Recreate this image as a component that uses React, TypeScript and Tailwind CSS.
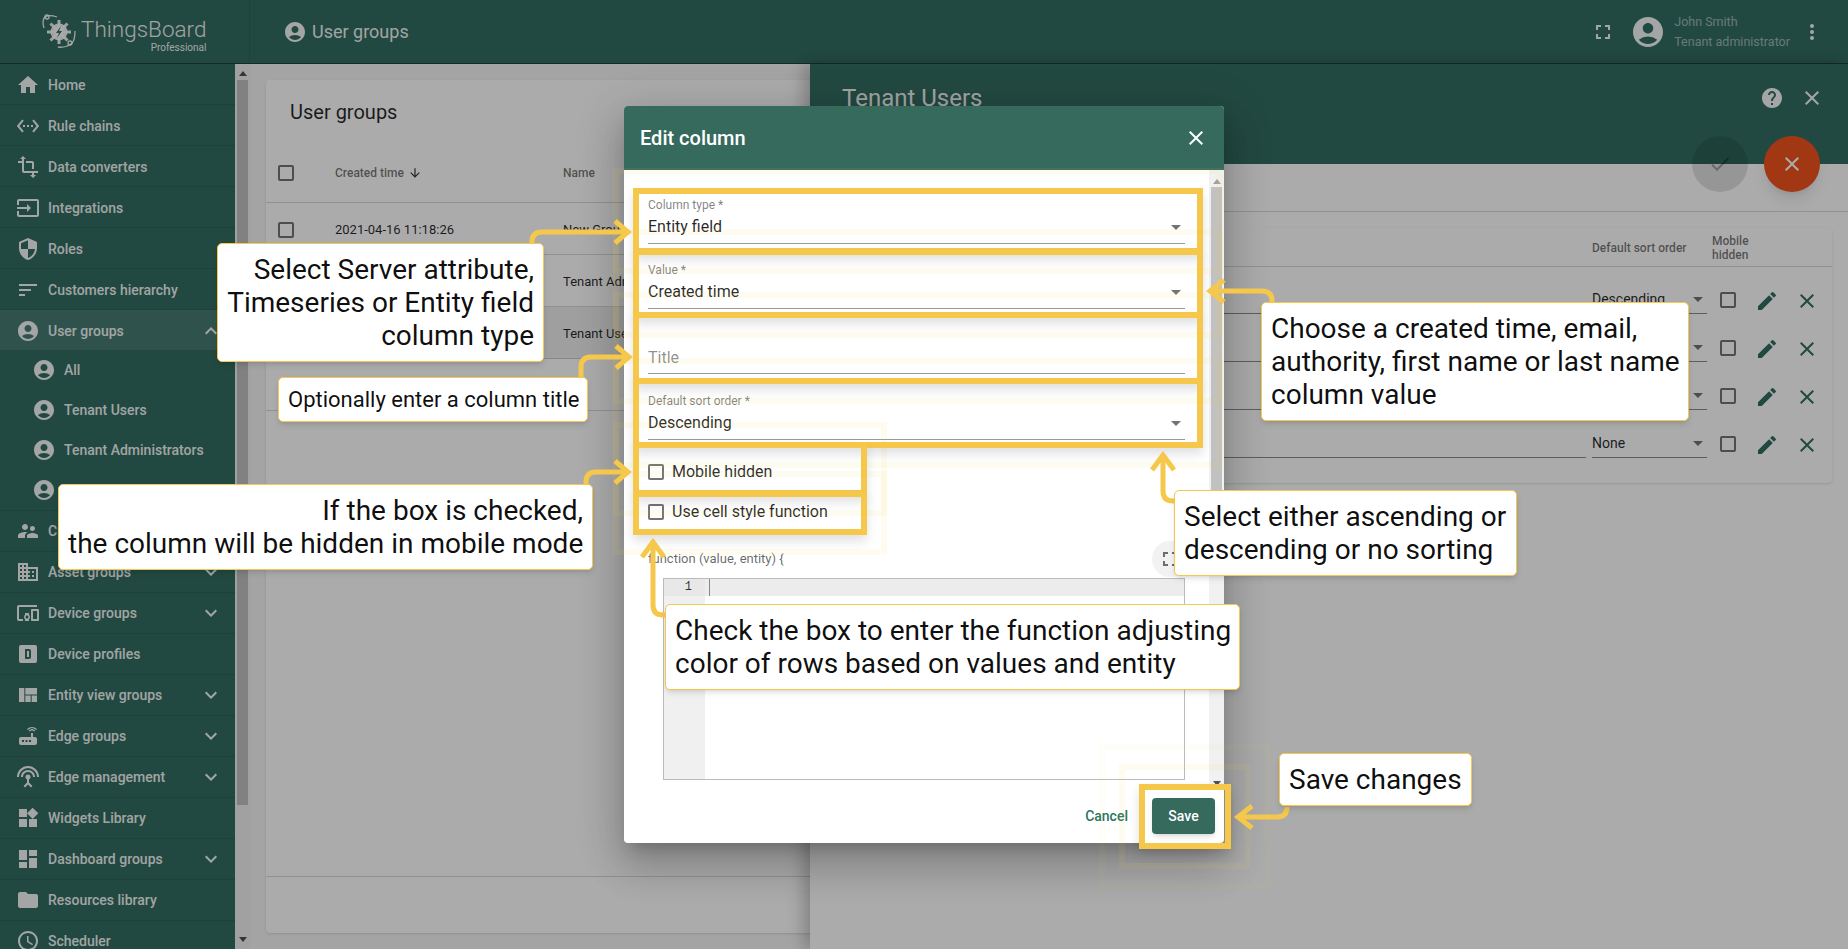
import type { ReactNode } from "react";
import type { IconType } from "react-icons";
import {
  MdAccountCircle,
  MdArrowDownward,
  MdArrowDropDown,
  MdCheck,
  MdClose,
  MdDashboard,
  MdDevicesOther,
  MdDomain,
  MdEdit,
  MdExpandLess,
  MdExpandMore,
  MdFolder,
  MdFullscreen,
  MdHelp,
  MdHome,
  MdInput,
  MdMoreVert,
  MdRouter,
  MdSchedule,
  MdSecurity,
  MdSettingsEthernet,
  MdSettingsInputAntenna,
  MdSort,
  MdSupervisorAccount,
  MdTransform,
  MdViewQuilt,
  MdWidgets,
} from "react-icons/md";

function ProfileIcon({ className }: { className?: string }) {
  return (
    <svg viewBox="0 0 24 24" fill="currentColor" className={className} aria-hidden>
      <path
        fillRule="evenodd"
        d="M5 3h14a2 2 0 0 1 2 2v14a2 2 0 0 1-2 2H5a2 2 0 0 1-2-2V5a2 2 0 0 1 2-2Zm4 4v10h4a2 2 0 0 0 2-2V9a2 2 0 0 0-2-2H9Zm2 2h2v6h-2V9Z"
      />
    </svg>
  );
}

type NavItem = { label: string; icon: IconType | typeof ProfileIcon; chevron?: boolean };

const NAV_TOP: NavItem[] = [
  { label: "Home", icon: MdHome },
  { label: "Rule chains", icon: MdSettingsEthernet },
  { label: "Data converters", icon: MdTransform },
  { label: "Integrations", icon: MdInput },
  { label: "Roles", icon: MdSecurity },
  { label: "Customers hierarchy", icon: MdSort },
];

const NAV_SUB = ["All", "Tenant Users", "Tenant Administrators", "Customer Users"];

const NAV_BOTTOM: NavItem[] = [
  { label: "Customer groups", icon: MdSupervisorAccount, chevron: true },
  { label: "Asset groups", icon: MdDomain, chevron: true },
  { label: "Device groups", icon: MdDevicesOther, chevron: true },
  { label: "Device profiles", icon: ProfileIcon },
  { label: "Entity view groups", icon: MdViewQuilt, chevron: true },
  { label: "Edge groups", icon: MdRouter, chevron: true },
  { label: "Edge management", icon: MdSettingsInputAntenna, chevron: true },
  { label: "Widgets Library", icon: MdWidgets },
  { label: "Dashboard groups", icon: MdDashboard, chevron: true },
  { label: "Resources library", icon: MdFolder },
  { label: "Scheduler", icon: MdSchedule },
];

function Logo() {
  return (
    <svg viewBox="0 0 40 40" className="h-[40px] w-[40px] text-white/90" aria-hidden>
      <g fill="none" stroke="currentColor" strokeWidth="1.3">
        <path d="M4 16C2 10 3 5 7 4c4-1 7 0 10 1" />
        <circle cx="7" cy="5" r="2" />
        <path d="M18 35c5 1 11-1 14-4 3-3 3-8 3-12" />
        <circle cx="30" cy="31" r="2" />
      </g>
      <circle cx="19" cy="20" r="8.5" fill="currentColor" />
      <g stroke="currentColor" strokeWidth="3">
        <path d="M19 8v24M7 20h24M10.5 11.5l17 17M27.5 11.5l-17 17" />
      </g>
      <path d="M21 14l-5 7h3l-2 5 5-7h-3l2-5Z" fill="#336e62" />
    </svg>
  );
}

function SideRow({ item, nudge = false }: { item: NavItem; nudge?: boolean }) {
  const Icon = item.icon;
  return (
    <div
      className={`flex h-[41px] shrink-0 items-center gap-2 border-b border-black/10 pl-4 pr-3 ${nudge ? "pt-[2px]" : ""}`}
    >
      <Icon className="h-6 w-6 shrink-0" />
      <span className="flex-1 truncate text-[14px] font-medium">{item.label}</span>
      {item.chevron ? <MdExpandMore className="h-6 w-6 shrink-0" /> : null}
    </div>
  );
}

function Sidebar() {
  return (
    <aside className="flex h-full w-[250px] shrink-0 overflow-hidden">
      <nav className="flex w-[235px] flex-col bg-[#336e62] text-white/95">
        {NAV_TOP.map((item) => (
          <SideRow key={item.label} item={item} nudge />
        ))}
        <div className="flex h-[40px] shrink-0 items-center gap-2 bg-white/10 pl-4 pr-3 pt-[2px]">
          <MdAccountCircle className="h-6 w-6" />
          <span className="flex-1 text-[14px] font-medium">User groups</span>
          <MdExpandLess className="h-6 w-6" />
        </div>
        <div className="flex shrink-0 flex-col border-b border-black/10">
          {NAV_SUB.map((label) => (
            <div key={label} className="flex h-[40px] items-center gap-2 pl-8">
              <MdAccountCircle className="h-6 w-6" />
              <span className="text-[14px] font-medium">{label}</span>
            </div>
          ))}
        </div>
        {NAV_BOTTOM.map((item) => (
          <SideRow key={item.label} item={item} />
        ))}
      </nav>
      <div className="flex w-[15px] flex-col items-center bg-[#f1f1f1]">
        <div className="mt-[7px] h-0 w-0 border-x-[4px] border-b-[5px] border-x-transparent border-b-[#505050]" />
        <div className="mt-[4px] h-[725px] w-[11px] bg-[#c1c1c1]" />
        <div className="mt-[132px] h-0 w-0 border-x-[4px] border-t-[5px] border-x-transparent border-t-[#505050]" />
      </div>
    </aside>
  );
}

function Box({ className = "" }: { className?: string }) {
  return <span className={`block h-4 w-4 shrink-0 rounded-[2px] border-2 border-black/55 ${className}`} />;
}

function GroupsCard() {
  const rows = [
    { date: "2021-04-16 11:18:26", name: "New Group", on: false },
    { date: "2021-04-16 11:18:26", name: "Tenant Administrators", on: false },
    { date: "2021-04-16 11:18:26", name: "Tenant Users", on: true },
  ];
  return (
    <section className="flex flex-1 flex-col rounded-sm bg-white shadow">
      <h2 className="flex h-16 items-center px-6 text-[20px] text-black/85">User groups</h2>
      <div className="grid h-[59px] grid-cols-[57px_228px_1fr] items-center border-b border-black/15 pl-3 text-[12px] font-medium text-black/55">
        <Box />
        <div className="flex items-center gap-1">
          Created time <MdArrowDownward className="h-[14px] w-[14px] text-black/80" />
        </div>
        <div>Name</div>
      </div>
      {rows.map((r) => (
        <div
          key={r.name}
          className={`grid h-[52px] grid-cols-[57px_228px_1fr] items-center border-b border-black/15 pl-3 pt-[2px] text-[13px] text-black/85 ${r.on ? "bg-[#eeeeee]" : ""}`}
        >
          <Box />
          <div>{r.date}</div>
          <div>{r.name}</div>
        </div>
      ))}
      <div className="h-[52px] border-b border-black/15" />
      <div className="flex-1" />
      <div className="h-[57px] border-t border-black/15" />
    </section>
  );
}

function ColumnRow({ sort }: { sort: string }) {
  return (
    <div className="flex h-12 items-start pl-4 pr-[13px]">
      <div className="h-[37px] flex-1 border-b border-black/45" />
      <div className="relative ml-1.5 flex h-[37px] w-[115px] items-end border-b border-black/45 pb-[6px] text-[14px] leading-4 text-black/85">
        {sort}
        <MdArrowDropDown className="absolute right-[-3px] top-[10px] h-6 w-6 text-black/55" />
      </div>
      <Box className="ml-[13px] mt-[15px]" />
      <MdEdit className="ml-[19px] mt-3 h-6 w-6 text-[#336e62]" />
      <MdClose className="ml-4 mt-3 h-6 w-6 text-[#336e62]" />
    </div>
  );
}

function TenantPanel() {
  return (
    <section className="absolute bottom-0 left-[810px] right-0 top-16 flex flex-col bg-white shadow-[-6px_0_16px_rgba(0,0,0,0.25)]">
      <header className="flex h-[100px] shrink-0 bg-[#336e62] pl-8 pr-6 pt-4 text-white/95">
        <h2 className="flex-1 text-[24px] leading-9">Tenant Users</h2>
        <MdHelp className="mr-4 mt-[6px] h-6 w-6" />
        <MdClose className="mt-[6px] h-6 w-6" />
      </header>
      <div className="absolute right-7 top-[72px] flex gap-4">
        <div className="flex h-14 w-14 items-center justify-center rounded-full bg-black/[0.12]">
          <MdCheck className="h-6 w-6 text-black/30" />
        </div>
        <div className="flex h-14 w-14 items-center justify-center rounded-full bg-[#f2521e] text-white shadow-lg">
          <MdClose className="h-6 w-6" />
        </div>
      </div>
      <div className="h-12 shrink-0 border-b border-black/15" />
      <div className="mx-4 mt-4 flex flex-col rounded-sm bg-white pb-[14px] shadow">
        <div className="mb-2.5 flex h-[39px] items-center border-b border-black/15 pt-px text-[12px] font-medium leading-[14px] text-black/55">
          <span className="ml-[766px] w-[120px]">Default sort order</span>
          <span>
            Mobile
            <br />
            hidden
          </span>
        </div>
        <ColumnRow sort="Descending" />
        <ColumnRow sort="Descending" />
        <ColumnRow sort="Descending" />
        <ColumnRow sort="None" />
      </div>
    </section>
  );
}

function SelectField({ label, value }: { label: string; value: string }) {
  return (
    <div className="relative mb-[15px] h-[50px] border-b border-black/40 pt-1">
      <div className="text-[12px] leading-[14px] text-black/50">{label}</div>
      <div className="mt-[5px] text-[16px] leading-5 text-black/85">{value}</div>
      <MdArrowDropDown className="absolute right-[-3px] top-[21px] h-6 w-6 text-black/55" />
    </div>
  );
}

function EditColumnDialog() {
  return (
    <div className="absolute left-[624px] top-[106px] flex h-[737px] w-[600px] flex-col overflow-hidden rounded bg-white shadow-[0_11px_15px_-7px_rgba(0,0,0,0.2),0_24px_38px_3px_rgba(0,0,0,0.14),0_9px_46px_8px_rgba(0,0,0,0.12)]">
      <header className="flex h-16 shrink-0 items-center justify-between bg-[#356a5c] pl-4 pr-[16px] text-white">
        <h2 className="text-[20px] font-medium">Edit column</h2>
        <MdClose className="h-6 w-6" />
      </header>
      <div className="flex min-h-0 flex-1">
        <div className="flex-1 overflow-hidden pl-6 pr-[24px] pt-6">
          <SelectField label="Column type *" value="Entity field" />
          <SelectField label="Value *" value="Created time" />
          <div className="mb-[16px] flex h-[50px] items-end border-b border-black/40 pb-[5px] text-[16px] leading-5 text-black/45">
            Title
          </div>
          <SelectField label="Default sort order *" value="Descending" />
          <label className="mt-[20px] flex h-6 items-center gap-2 text-[16px] text-black/85">
            <Box />
            Mobile hidden
          </label>
          <label className="mt-4 flex h-6 items-center gap-2 text-[16px] text-black/85">
            <Box />
            Use cell style function
          </label>
          <div className="mt-[27px] flex h-4 items-center justify-between text-[13px] text-black/60">
            function (value, entity) {"{"}
            <span className="-mr-[3px] flex h-9 w-9 items-center justify-center rounded-full bg-[#f2f2f2]">
              <MdFullscreen className="h-6 w-6 text-black/55" />
            </span>
          </div>
          <div className="ml-[15px] mt-[11px] flex h-[202px] border border-[#bbbbbb]">
            <div className="w-[41px] bg-[#f0f0f0]">
              <div className="h-[17px] bg-[#e8e8e8] pr-[13px] text-right font-['Liberation_Mono',monospace] text-[12px] leading-[17px] text-black/80">
                1
              </div>
            </div>
            <div className="flex-1">
              <div className="h-[17px] bg-[#ececec] pl-1">
                <div className="h-full w-px bg-[#888888]" />
              </div>
            </div>
          </div>
        </div>
        <div className="flex w-[15px] flex-col items-center bg-[#f1f1f1]">
          <div className="mt-[9px] h-0 w-0 border-x-[4px] border-b-[5px] border-x-transparent border-b-[#a0a0a0]" />
          <div className="mt-[3px] h-[345px] w-[11px] bg-[#c1c1c1]" />
          <div className="mt-[249px] h-0 w-0 border-x-[4px] border-t-[5px] border-x-transparent border-t-[#505050]" />
        </div>
      </div>
      <footer className="flex h-[54px] shrink-0 items-center justify-end gap-2 pr-[9px] text-[14px] font-medium">
        <button type="button" className="h-9 px-4 text-[#2a7560]">
          Cancel
        </button>
        <button type="button" className="h-9 w-[63px] rounded bg-[#356a5c] text-white shadow-md">
          Save
        </button>
      </footer>
    </div>
  );
}

const HIGHLIGHTS = [
  "left-[633px] top-[188px] h-[66px] w-[570px]",
  "left-[633px] top-[249px] h-[69px] w-[570px]",
  "left-[633px] top-[312px] h-[72px] w-[570px]",
  "left-[633px] top-[378px] h-[70px] w-[570px]",
  "left-[633px] top-[442px] h-[54px] w-[234px]",
  "left-[633px] top-[491px] h-[44px] w-[234px]",
  "left-[1139px] top-[784px] h-[65px] w-[92px]",
];

const GHOSTS = [
  "left-[613px] top-[168px] h-[106px] w-[610px]",
  "left-[613px] top-[229px] h-[109px] w-[610px]",
  "left-[613px] top-[292px] h-[112px] w-[610px]",
  "left-[613px] top-[358px] h-[110px] w-[610px]",
  "left-[613px] top-[422px] h-[94px] w-[274px]",
  "left-[613px] top-[471px] h-[84px] w-[274px]",
  "left-[1119px] top-[764px] h-[105px] w-[132px]",
  "left-[1099px] top-[744px] h-[145px] w-[172px] opacity-50",
];

function Callout({ className, children }: { className: string; children: ReactNode }) {
  return (
    <div
      className={`absolute whitespace-pre rounded-[5px] border border-[#f5c84c] bg-white p-[9px] text-black/95 shadow-md ${className}`}
    >
      {children}
    </div>
  );
}

function Arrows() {
  const yellow = "#f5c84c";
  return (
    <svg className="absolute inset-0 h-[949px] w-[1848px]" viewBox="0 0 1848 949" fill="none" stroke={yellow} strokeWidth="5" aria-hidden>
      <path d="M532 245V242Q532 232 542 232H626M615 221L628 232L615 243" />
      <path d="M581 379V367Q581 357 591 357H626M616 346L629 357L616 368" />
      <path d="M586 486V482Q586 472 596 472H626M615 461L628 472L615 483" />
      <path d="M1272 304V301Q1272 291 1262 291H1212M1224 280L1210 291L1224 302" />
      <path d="M1177 501H1173Q1163 501 1163 491V457M1152 470L1163 455L1174 470" />
      <path d="M667 615H663Q653 615 653 605V544M642 557L653 542L664 557" />
      <path d="M1287 807V807Q1287 817 1277 817H1240M1252 806L1238 817L1252 828" />
    </svg>
  );
}

export default function App() {
  return (
    <div className="relative h-screen w-screen overflow-hidden bg-[#f5f5f5] font-['Roboto',sans-serif]">
      <header className="flex h-16 items-center border-b border-black/40 bg-[#336e62] text-white/95">
        <div className="flex h-full w-[250px] shrink-0 items-center border-r border-black/10 pl-[40px]">
          <Logo />
          <div className="ml-[1px] flex flex-col items-end pt-[6px]">
            <span className="text-[22.5px] font-light leading-[26px]">ThingsBoard</span>
            <span className="text-[10px] leading-3">Professional</span>
          </div>
        </div>
        <MdAccountCircle className="ml-[33px] h-6 w-6" />
        <span className="ml-[5px] flex-1 text-[18px]">User groups</span>
        <MdFullscreen className="h-6 w-6" />
        <MdAccountCircle className="ml-[15px] h-9 w-9" />
        <div className="ml-[8px] flex flex-col gap-[6px] text-[12.5px] leading-[14px] text-white/50">
          <span>John Smith</span>
          <span>Tenant administrator</span>
        </div>
        <MdMoreVert className="ml-[10px] mr-[24px] h-6 w-6" />
      </header>
      <div className="flex h-[885px]">
        <Sidebar />
        <main className="flex flex-1 flex-col p-4">
          <GroupsCard />
        </main>
      </div>
      <TenantPanel />
      <div className="absolute inset-0 bg-black/[0.33]" />
      <EditColumnDialog />
      {GHOSTS.map((g) => (
        <div key={g} className={`absolute border-[6px] border-[#f5c84c]/[0.08] ${g}`} />
      ))}
      {HIGHLIGHTS.map((h) => (
        <div key={h} className={`absolute border-[6px] border-[#f5c84c] shadow-[0_6px_10px_rgba(0,0,0,0.12)] ${h}`} />
      ))}
      <Arrows />
      <Callout className="left-[217px] top-[243px] w-[327px] text-right text-[28px] leading-[33px]">
        {"Select Server attribute,\nTimeseries or Entity field\ncolumn type"}
      </Callout>
      <Callout className="left-[278px] top-[377px] w-[310px] text-center text-[22px] leading-[25px]">
        Optionally enter a column title
      </Callout>
      <Callout className="left-[58px] top-[484px] w-[535px] text-right text-[28px] leading-[33px]">
        {"If the box is checked,\nthe column will be hidden in mobile mode"}
      </Callout>
      <Callout className="left-[1261px] top-[302px] w-[428px] text-[28px] leading-[33px]">
        {"Choose a created time, email,\nauthority, first name or last name\ncolumn value"}
      </Callout>
      <Callout className="left-[1174px] top-[490px] w-[343px] text-[28px] leading-[33px]">
        {"Select either ascending or\ndescending or no sorting"}
      </Callout>
      <Callout className="left-[665px] top-[604px] w-[575px] text-[28px] leading-[33px]">
        {"Check the box to enter the function adjusting\ncolor of rows based on values and entity"}
      </Callout>
      <Callout className="left-[1279px] top-[753px] w-[193px] text-[28px] leading-[33px]">Save changes</Callout>
    </div>
  );
}
